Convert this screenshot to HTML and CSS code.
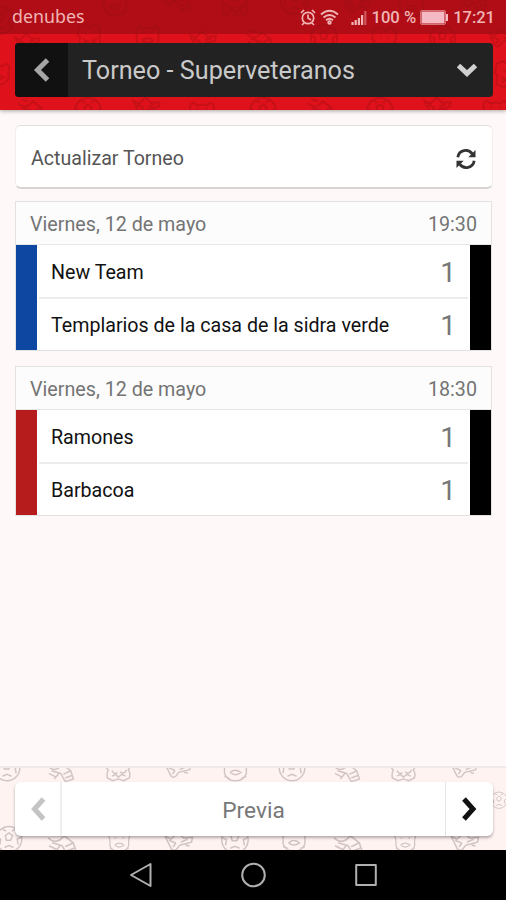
FILE: index.html
```html
<!DOCTYPE html>
<html lang="es">

<head>
    <meta charset="UTF-8">
    <meta name="viewport" content="width=device-width, initial-scale=1.0">
    <title>Torneo - Superveteranos</title>
    <link rel="stylesheet" href="styles.css">
</head>

<body>

    <!-- Doodles shared by the header and footer backgrounds -->
    <svg class="sprites">
        <symbol id="ball" viewBox="0 0 30 30" overflow="visible">
            <circle cx="15" cy="15" r="14"/>
            <path d="M11 11l4-3 4 3-2 5h-5zM2 13l4 2-1 6M28 13l-4 2 1 6M10 24l5-2 5 2M8 4l4 2M22 4l-4 2"/>
        </symbol>
        <symbol id="shirt" viewBox="0 0 30 30" overflow="visible">
            <path d="M3 4l7-3 5 4 5-4 7 3 1 10-2 3q3 4 1 9l-6 3-6-2-6 2-6-3q-1-5 1-9l-3-3zM8 18q3 5 6 2M17 19q4 4 7-2M10 12h2M18 12h2M8 24l4-2 3 3 4-3 4 2"/>
        </symbol>
        <symbol id="boot" viewBox="0 0 30 30" overflow="visible">
            <path d="M1 13q6 6 12 2l4-4 9 7 3 9-9 3-5-9-10-3M18 22l8-4M20 26l8-3M5 9l7 2M2 21l8 4M8 27l5-6"/>
        </symbol>
        <symbol id="whistle" viewBox="0 0 30 30" overflow="visible">
            <path d="M1 14l6 12q2 4 6 1l3-4 12-3 1-5-9 1-6-6-7 7zM5 18l7 3M9 25l3-4M17 20l7-3M22 23l4 1"/>
        </symbol>
        <symbol id="face" viewBox="0 0 30 30" overflow="visible">
            <path d="M3 13q-3-7 3-9l4 3q5-2 10 0l4-3q6 3 3 9v8q-3 8-12 8T3 21zM9 11h2M19 11h2M9 20q6-5 12 0q-6 5-12 0M3 24l5 2M27 24l-5 2"/>
        </symbol>
    </svg>

    <header class="header">
        <svg class="doodles doodles-dark" viewBox="0 0 506 110">
            <use href="#ball" x="-15" y="5" width="30" height="30"/>
            <use href="#face" x="101" y="-13" width="28" height="30"/>
            <use href="#boot" x="161" y="-20" width="30" height="30"/>
            <use href="#shirt" x="221" y="-12" width="28" height="30"/>
            <use href="#ball" x="280" y="-14" width="29" height="29"/>
            <use href="#whistle" x="342" y="-14" width="29" height="29"/>
            <use href="#face" x="397" y="-12" width="29" height="30"/>
            <use href="#boot" x="459" y="-18" width="29" height="29"/>
            <use href="#whistle" x="14" y="23" width="26" height="30"/>
            <use href="#shirt" x="77" y="22" width="25" height="28"/>
            <use href="#face" x="134" y="22" width="27" height="28"/>
            <use href="#whistle" x="188" y="22" width="30" height="28"/>
            <use href="#boot" x="246" y="22" width="28" height="28"/>
            <use href="#ball" x="310" y="24" width="28" height="28"/>
            <use href="#shirt" x="371" y="26" width="27" height="28"/>
            <use href="#ball" x="429" y="24" width="27" height="28"/>
            <use href="#whistle" x="488" y="20" width="28" height="28"/>
            <use href="#face" x="-14" y="59" width="25" height="28"/>
            <use href="#shirt" x="494" y="60" width="28" height="28"/>
            <use href="#boot" x="17" y="91" width="28" height="28"/>
            <use href="#ball" x="74" y="97" width="28" height="28"/>
            <use href="#whistle" x="132" y="88" width="29" height="28"/>
            <use href="#face" x="188" y="99" width="28" height="28"/>
            <use href="#ball" x="249" y="97" width="28" height="28"/>
            <use href="#boot" x="307" y="91" width="28" height="28"/>
            <use href="#ball" x="366" y="97" width="28" height="28"/>
            <use href="#whistle" x="423" y="88" width="29" height="28"/>
            <use href="#face" x="481" y="97" width="29" height="28"/>
        </svg>

        <div class="status-bar">
            <span class="carrier">denubes</span>
            <div class="status-icons">
                <svg class="icon-alarm" viewBox="0 0 16 17">
                    <circle cx="8" cy="9" r="5.7"/>
                    <path d="M8 5.5V9l3 2M1 4l3-3M15 4l-3-3M4 14l-2 2M12 14l2 2"/>
                </svg>
                <svg class="icon-wifi" viewBox="0 0 19 16">
                    <path d="M1 5.500q8.500-7.500 17 0M3.500 8.500q6-5 12 0M6 11.300q3.500-3 7 0"/>
                    <circle cx="9.500" cy="13.500" r="1.300"/>
                </svg>
                <svg class="icon-signal" viewBox="0 0 16 15">
                    <path d="M1.500 15v-3M4.700 15v-5M7.900 15V8M11.100 15V5"/>
                    <path class="faded" d="M14.300 15V1"/>
                </svg>
                <span class="percent">100 %</span>
                <svg class="icon-battery" viewBox="0 0 28 15">
                    <rect class="battery-case" x="0.500" y="0.500" width="25" height="14" rx="1.500"/>
                    <rect x="1.500" y="1.500" width="23" height="12"/>
                    <rect x="26" y="4" width="2" height="7"/>
                </svg>
                <span class="clock">17:21</span>
            </div>
        </div>

        <div class="title-bar">
            <div class="back">
                <svg width="18" height="26" viewBox="0 0 18 26"><path d="M15.500 3L5.500 13l10 10"/></svg>
            </div>
            <h1>Torneo - Superveteranos</h1>
            <svg class="chevron-down" width="22" height="16" viewBox="0 0 22 16"><path d="M2.500 3.500l8.500 8 8.500-8"/></svg>
        </div>
    </header>

    <main class="content">
        <div class="refresh">
            <span>Actualizar Torneo</span>
            <svg width="20" height="20" viewBox="0 0 20 20">
                <path class="arc" d="M1.800 8.200C3 .8 12-.8 16.300 4.800M18.200 11.800C17 19.200 8 20.800 3.700 15.200"/>
                <path class="tip" d="M19.500 1v7.200h-7.200zM.5 19v-7.200h7.200z"/>
            </svg>
        </div>

        <div class="match">
            <div class="match-header">
                <span>Viernes, 12 de mayo</span>
                <span>19:30</span>
            </div>
            <div class="match-body blue">
                <div class="team">
                    <span class="name">New Team</span>
                    <span class="score">1</span>
                </div>
                <div class="team">
                    <span class="name">Templarios de la casa de la sidra verde</span>
                    <span class="score">1</span>
                </div>
            </div>
        </div>

        <div class="match">
            <div class="match-header">
                <span>Viernes, 12 de mayo</span>
                <span>18:30</span>
            </div>
            <div class="match-body red">
                <div class="team">
                    <span class="name">Ramones</span>
                    <span class="score">1</span>
                </div>
                <div class="team">
                    <span class="name">Barbacoa</span>
                    <span class="score">1</span>
                </div>
            </div>
        </div>
    </main>

    <footer class="footer">
        <svg class="doodles doodles-light" viewBox="0 0 506 84">
            <use href="#ball" x="-13" y="-14" width="28" height="28"/>
            <use href="#boot" x="42" y="-14" width="28" height="28"/>
            <use href="#shirt" x="101" y="-14" width="28" height="28"/>
            <use href="#whistle" x="162" y="-17" width="28" height="28"/>
            <use href="#face" x="221" y="-14" width="28" height="28"/>
            <use href="#ball" x="279" y="-14" width="28" height="28"/>
            <use href="#boot" x="335" y="-14" width="28" height="28"/>
            <use href="#shirt" x="393" y="-14" width="28" height="28"/>
            <use href="#whistle" x="455" y="-17" width="28" height="28"/>
            <use href="#ball" x="496" y="24" width="18" height="18"/>
            <use href="#ball" x="-11" y="59" width="28" height="28"/>
            <use href="#boot" x="42" y="58" width="31" height="31"/>
            <use href="#face" x="104" y="62" width="24" height="26"/>
            <use href="#whistle" x="160" y="56" width="34" height="30"/>
            <use href="#ball" x="220" y="59" width="29" height="29"/>
            <use href="#face" x="281" y="58" width="28" height="28"/>
            <use href="#boot" x="335" y="58" width="31" height="31"/>
            <use href="#face" x="397" y="62" width="24" height="26"/>
            <use href="#whistle" x="453" y="56" width="34" height="30"/>
        </svg>
        <div class="pager">
            <div class="page-button disabled">
                <svg width="18" height="26" viewBox="0 0 18 26"><path d="M14.500 3l-9 10 9 10"/></svg>
            </div>
            <span class="page-name">Previa</span>
            <div class="page-button">
                <svg width="18" height="26" viewBox="0 0 18 26"><path d="M3 3l9 10-9 10"/></svg>
            </div>
        </div>
    </footer>

    <nav class="nav-bar">
        <svg viewBox="0 0 26 26"><path d="M4 13L23.500 2v22z"/></svg>
        <svg viewBox="0 0 26 26"><circle cx="13.500" cy="13" r="11.300"/></svg>
        <svg viewBox="0 0 26 26"><rect x="3.200" y="3" width="19.600" height="20"/></svg>
    </nav>

</body>

</html>
```
FILE: styles.css
```css
* {
    box-sizing: border-box;
    margin: 0;
    padding: 0;
}

body {
    display: flex;
    flex-direction: column;
    height: 900px;
    font-family: Roboto, Arial, sans-serif;
    background-color: #fff8f8;
    overflow: hidden;
}

svg {
    display: block;
    flex-shrink: 0;
    fill: none;
    stroke: currentColor;
}

.sprites {
    position: absolute;
    width: 0;
    height: 0;
}

/* Header */
.header {
    position: relative;
    height: 110px;
    background-color: #df111a;
    box-shadow: 0 1px 4px rgba(0, 0, 0, 0.35);
}

.doodles {
    position: absolute;
    top: 0;
    left: 0;
    width: 100%;
    height: 100%;
    overflow: hidden;
}

.doodles-dark {
    color: #a80f16;
    stroke-width: 2;
    opacity: 0.45;
}

.doodles-light {
    color: #d2c4c4;
    stroke-width: 1.6;
}

.status-bar {
    position: relative;
    display: flex;
    justify-content: space-between;
    height: 34px;
    padding: 0 11px 0 12px;
    background-color: rgba(151, 12, 20, 0.65);
    color: #f1b4b5;
}

.carrier {
    font-family: "Noto Sans", sans-serif;
    font-size: 17.8px;
    line-height: 32px;
}

.status-icons {
    display: flex;
    align-items: center;
    height: 34px;
    font-size: 17px;
}

.icon-alarm {
    width: 16px;
    height: 17px;
    stroke-width: 1.7;
}

.icon-wifi {
    width: 19px;
    height: 16px;
    margin-left: 4px;
    stroke-width: 1.8;
}

.icon-signal {
    width: 16px;
    height: 15px;
    margin-left: 12px;
    stroke-width: 2.2;
}

.faded {
    opacity: 0.45;
}

.percent {
    margin-left: 4px;
    font-size: 16.6px;
    font-weight: 500;
}

.icon-battery {
    width: 28px;
    height: 15px;
    margin: 0 5px 0 4px;
    fill: #f4b9c2;
    stroke: none;
}

.battery-case {
    fill: none;
    stroke: currentColor;
    opacity: 0.6;
}

.clock {
    font-size: 16.5px;
    font-weight: 500;
}

.title-bar {
    position: relative;
    display: flex;
    align-items: center;
    height: 54px;
    margin: 8.5px 13px 0 14.5px;
    padding-right: 15px;
    background-color: #222;
    border-radius: 4px;
    overflow: hidden;
    color: #d0d0d0;
}

.back {
    display: flex;
    align-items: center;
    justify-content: center;
    width: 53px;
    height: 54px;
    background-color: #111;
    color: #a6a6a6;
    stroke-width: 5;
}

.title-bar h1 {
    flex: 1;
    padding: 2px 0 0 14.5px;
    font-size: 25.2px;
    font-weight: 400;
    color: #c9c9c9;
}

.chevron-down {
    stroke-width: 5;
}

/* Matches */
.content {
    flex: 1;
    padding: 15px 14px 0 15px;
}

.refresh {
    display: flex;
    align-items: center;
    justify-content: space-between;
    height: 64px;
    margin-right: -1px;
    margin-bottom: 12px;
    padding: 4px 16px 0 15px;
    background-color: #fff;
    border: 1px solid #f3eeed;
    border-top-color: #e2dede;
    border-bottom: 2px solid #d8d4d4;
    border-radius: 6px;
    font-size: 19.6px;
    color: #555;
}

.refresh svg {
    color: #333;
}

.arc {
    stroke-width: 2.8;
}

.tip {
    fill: currentColor;
    stroke: none;
}

.match {
    height: 150px;
    margin-bottom: 15px;
    background-color: #fff;
    border: 1px solid #e2e2e0;
}

.match-header {
    display: flex;
    align-items: center;
    justify-content: space-between;
    height: 43px;
    padding: 2px 14px 0 14px;
    background-color: #fcfcfc;
    border-bottom: 1px solid #e6e6e6;
    font-size: 19.7px;
    color: #747474;
}

.match-body {
    height: 105px;
    padding: 0 2px;
    border-right: 21px solid #000;
}

.blue {
    border-left: 21px solid #0d47a1;
}

.red {
    border-left: 21px solid #b71c1c;
}

.team {
    display: flex;
    align-items: center;
    justify-content: space-between;
    height: 53px;
    padding: 2px 12px 0;
}

.team + .team {
    height: 53px;
    margin-top: -1px;
    border-top: 2px solid #ececec;
}

.name {
    font-size: 19.65px;
    color: #111;
}

.score {
    font-size: 28px;
    color: #777;
}

/* Footer */
.footer {
    position: relative;
    height: 84px;
    padding: 14px 13px 0 15px;
    background-color: #fff3f2;
    border-top: 2px solid #efe9e8;
}

.pager {
    position: relative;
    display: flex;
    align-items: center;
    height: 54px;
    background-color: #fff;
    border-radius: 6px;
    box-shadow: 0 2px 3px rgba(0, 0, 0, 0.3);
}

.page-button {
    display: flex;
    align-items: center;
    justify-content: center;
    width: 48px;
    height: 54px;
    border-left: 1px solid #e4e4e4;
    color: #111;
    stroke-width: 5;
}

.page-button.disabled {
    width: 47px;
    border-left: none;
    border-right: 2px solid #eee;
    color: #c4c4c4;
}

.page-name {
    flex: 1;
    padding-top: 2px;
    text-align: center;
    font-size: 22.7px;
    color: #777;
}

/* Android buttons */
.nav-bar {
    display: flex;
    justify-content: center;
    gap: 87px;
    height: 50px;
    padding-top: 12px;
    background-color: #000;
    color: #b0b0b0;
}

.nav-bar svg {
    width: 26px;
    height: 26px;
    stroke-width: 2;
    stroke-linejoin: round;
}
```
